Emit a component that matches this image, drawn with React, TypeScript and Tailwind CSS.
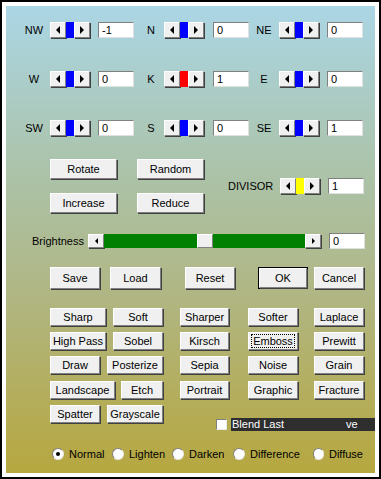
import React from "react";

const raised =
  "border border-t-white border-l-white border-r-[#808080] border-b-[#808080] shadow-[1px_1px_0_#404040]";

const Btn = ({
  w,
  label,
  ml = 0,
  h = "h-[18px]",
  isDefault = false,
  focus = false,
}: {
  w: string;
  label: string;
  ml?: number;
  h?: string;
  isDefault?: boolean;
  focus?: boolean;
}) => (
  <div
    className={`${w} ${h} shrink-0 ${isDefault ? "border border-black" : ""}`}
    style={{ marginLeft: ml }}
  >
    <div className={`flex h-full w-full items-center justify-center bg-[#f0f0f0] ${raised}`}>
      <span className={focus ? "border border-dotted border-black px-[1px] leading-[12px]" : ""}>{label}</span>
    </div>
  </div>
);

const Tri = ({ dir, small = false }: { dir: "l" | "r"; small?: boolean }) =>
  dir === "l" ? (
    <div
      className={
        small
          ? "h-0 w-0 border-y-[3px] border-r-[3px] border-y-transparent border-r-black"
          : "h-0 w-0 border-y-[4px] border-r-[4px] border-y-transparent border-r-black"
      }
    />
  ) : (
    <div
      className={
        small
          ? "h-0 w-0 border-y-[3px] border-l-[3px] border-y-transparent border-l-black"
          : "h-0 w-0 border-y-[4px] border-l-[4px] border-y-transparent border-l-black"
      }
    />
  );

const ScrollBtn = ({ dir, small = false }: { dir: "l" | "r"; small?: boolean }) => (
  <div className={`w-[16px] h-full shrink-0 flex items-center justify-center bg-[#f0f0f0] ${raised}`}>
    <Tri dir={dir} small={small} />
  </div>
);

const Spin = ({ thumb, ml = 0 }: { thumb: string; ml?: number }) => (
  <div className="flex h-[16px] w-[40px] shrink-0" style={{ marginLeft: ml }}>
    <ScrollBtn dir="l" />
    <div className={`h-full w-[8px] ${thumb}`} />
    <ScrollBtn dir="r" />
  </div>
);

const Field = ({ value, ml = 0 }: { value: string; ml?: number }) => (
  <div
    className="h-[16px] w-[36px] shrink-0 bg-white border border-t-[#808080] border-l-[#808080] border-r-[#e0e0e0] border-b-[#e0e0e0] pl-[3px] flex items-center leading-none"
    style={{ marginLeft: ml }}
  >
    {value}
  </div>
);

const Label = ({ text, ml = 0 }: { text: string; ml?: number }) => (
  <div className="w-[24px] shrink-0 text-center" style={{ marginLeft: ml }}>
    {text}
  </div>
);

const KernelRow = ({ cells }: { cells: [string, string, string][] }) => (
  <div className="flex h-[16px] items-center pl-[16px]">
    <Label text={cells[0][0]} />
    <Spin thumb={cells[0][1]} ml={4} />
    <Field value={cells[0][2]} ml={8} />
    <Label text={cells[1][0]} ml={5} />
    <Spin thumb={cells[1][1]} ml={1} />
    <Field value={cells[1][2]} ml={9} />
    <Label text={cells[2][0]} ml={3} />
    <Spin thumb={cells[2][1]} ml={3} />
    <Field value={cells[2][2]} ml={8} />
  </div>
);

const Radio = ({ label, checked = false, w }: { label: string; checked?: boolean; w: string }) => (
  <div className={`${w} flex shrink-0 items-center`}>
    <div className="flex h-[12px] w-[12px] items-center justify-center rounded-full bg-white border border-t-[#808080] border-l-[#808080] border-r-[#e8e8e8] border-b-[#e8e8e8]">
      {checked && <div className="h-[4px] w-[4px] rounded-full bg-black" />}
    </div>
    <span className="ml-[5px]">{label}</span>
  </div>
);

export default function App() {
  const blue = "bg-[#0000ff]";
  return (
    <div className="h-[479px] w-[381px] border-2 border-black bg-white p-[4px] font-['Liberation_Sans',Arial,sans-serif] text-[11px] text-black">
      <div className="flex h-full w-full flex-col bg-[linear-gradient(to_bottom,#abd6e5_0%,#abc4ad_33%,#b0b683_62%,#b6a73f_100%)] pt-[16px]">
        <KernelRow
          cells={[
            ["NW", blue, "-1"],
            ["N", blue, "0"],
            ["NE", blue, "0"],
          ]}
        />
        <div className="mt-[33px]">
          <KernelRow
            cells={[
              ["W", blue, "0"],
              ["K", "bg-[#ff0000]", "1"],
              ["E", blue, "0"],
            ]}
          />
        </div>
        <div className="mt-[33px]">
          <KernelRow
            cells={[
              ["SW", blue, "0"],
              ["S", blue, "0"],
              ["SE", blue, "1"],
            ]}
          />
        </div>

        {/* rotate / divisor block */}
        <div className="mt-[23px] flex items-center pl-[44px]">
          <div className="flex flex-col">
            <div className="flex">
              <Btn w="w-[67px]" h="h-[20px]" label="Rotate" />
              <Btn w="w-[67px]" h="h-[20px]" label="Random" ml={20} />
            </div>
            <div className="mt-[14px] flex">
              <Btn w="w-[67px]" h="h-[20px]" label="Increase" />
              <Btn w="w-[67px]" h="h-[20px]" label="Reduce" ml={20} />
            </div>
          </div>
          <div className="ml-[24px] w-[43px] shrink-0">DIVISOR</div>
          <Spin thumb="bg-[#ffff00]" ml={9} />
          <Field value="1" ml={8} />
        </div>

        {/* brightness */}
        <div className="mt-[20px] flex h-[16px] items-center pl-[26px]">
          <div className="w-[56px] shrink-0">Brightness</div>
          <div className="flex h-[14px] w-[233px] shrink-0">
            <ScrollBtn dir="l" small />
            <div className="flex flex-1 bg-[#008000]">
              <div className="ml-[93px] h-full w-[16px] bg-[#f0f0f0] border border-t-white border-l-white border-r-[#808080] border-b-[#808080]" />
            </div>
            <ScrollBtn dir="r" small />
          </div>
          <Field value="0" ml={8} />
        </div>

        {/* save row */}
        <div className="mt-[18px] flex h-[22px] pl-[44px]">
          <Btn w="w-[50px]" h="h-[22px]" label="Save" />
          <Btn w="w-[51px]" h="h-[22px]" label="Load" ml={10} />
          <Btn w="w-[50px]" h="h-[22px]" label="Reset" ml={24} />
          <Btn w="w-[50px]" h="h-[22px]" label="OK" ml={23} isDefault />
          <Btn w="w-[50px]" h="h-[22px]" label="Cancel" ml={6} />
        </div>

        {/* filters */}
        <div className="mt-[19px] flex flex-col gap-[6px]">
          <div className="flex pl-[44px]">
            <Btn w="w-[56px]" label="Sharp" />
            <Btn w="w-[50px]" label="Soft" ml={7} />
            <Btn w="w-[49px]" label="Sharper" ml={17} />
            <Btn w="w-[50px]" label="Softer" ml={19} />
            <Btn w="w-[50px]" label="Laplace" ml={16} />
          </div>
          <div className="flex pl-[44px]">
            <Btn w="w-[56px]" label="High Pass" />
            <Btn w="w-[50px]" label="Sobel" ml={7} />
            <Btn w="w-[49px]" label="Kirsch" ml={17} />
            <Btn w="w-[50px]" label="Emboss" ml={19} focus />
            <Btn w="w-[50px]" label="Prewitt" ml={16} />
          </div>
          <div className="flex pl-[44px]">
            <Btn w="w-[50px]" label="Draw" />
            <Btn w="w-[56px]" label="Posterize" ml={7} />
            <Btn w="w-[49px]" label="Sepia" ml={17} />
            <Btn w="w-[50px]" label="Noise" ml={19} />
            <Btn w="w-[50px]" label="Grain" ml={16} />
          </div>
          <div className="mt-[1px] flex pl-[44px]">
            <Btn w="w-[65px]" label="Landscape" />
            <Btn w="w-[42px]" label="Etch" ml={6} />
            <Btn w="w-[49px]" label="Portrait" ml={17} />
            <Btn w="w-[50px]" label="Graphic" ml={19} />
            <Btn w="w-[50px]" label="Fracture" ml={16} />
          </div>
          <div className="flex items-start pl-[44px]">
            <Btn w="w-[50px]" label="Spatter" />
            <Btn w="w-[56px]" label="Grayscale" ml={7} />
            <div className="ml-[53px] mt-[13px] flex flex-1 items-center">
              <div className="h-[11px] w-[11px] shrink-0 bg-white border border-t-[#808080] border-l-[#808080] border-r-[#e8e8e8] border-b-[#e8e8e8]" />
              <div className="ml-[4px] flex h-[13px] flex-1 items-center bg-[#2e2e2e] pl-[1px] text-white">
                <span>Blend Last</span>
                <span className="ml-[62px]">ve</span>
              </div>
            </div>
          </div>
        </div>

        {/* blend modes */}
        <div className="mt-[15px] flex items-center pl-[46px]">
          <Radio label="Normal" checked w="w-[60px]" />
          <Radio label="Lighten" w="w-[60px]" />
          <Radio label="Darken" w="w-[61px]" />
          <Radio label="Difference" w="w-[80px]" />
          <Radio label="Diffuse" w="w-[50px]" />
        </div>
      </div>
    </div>
  );
}
